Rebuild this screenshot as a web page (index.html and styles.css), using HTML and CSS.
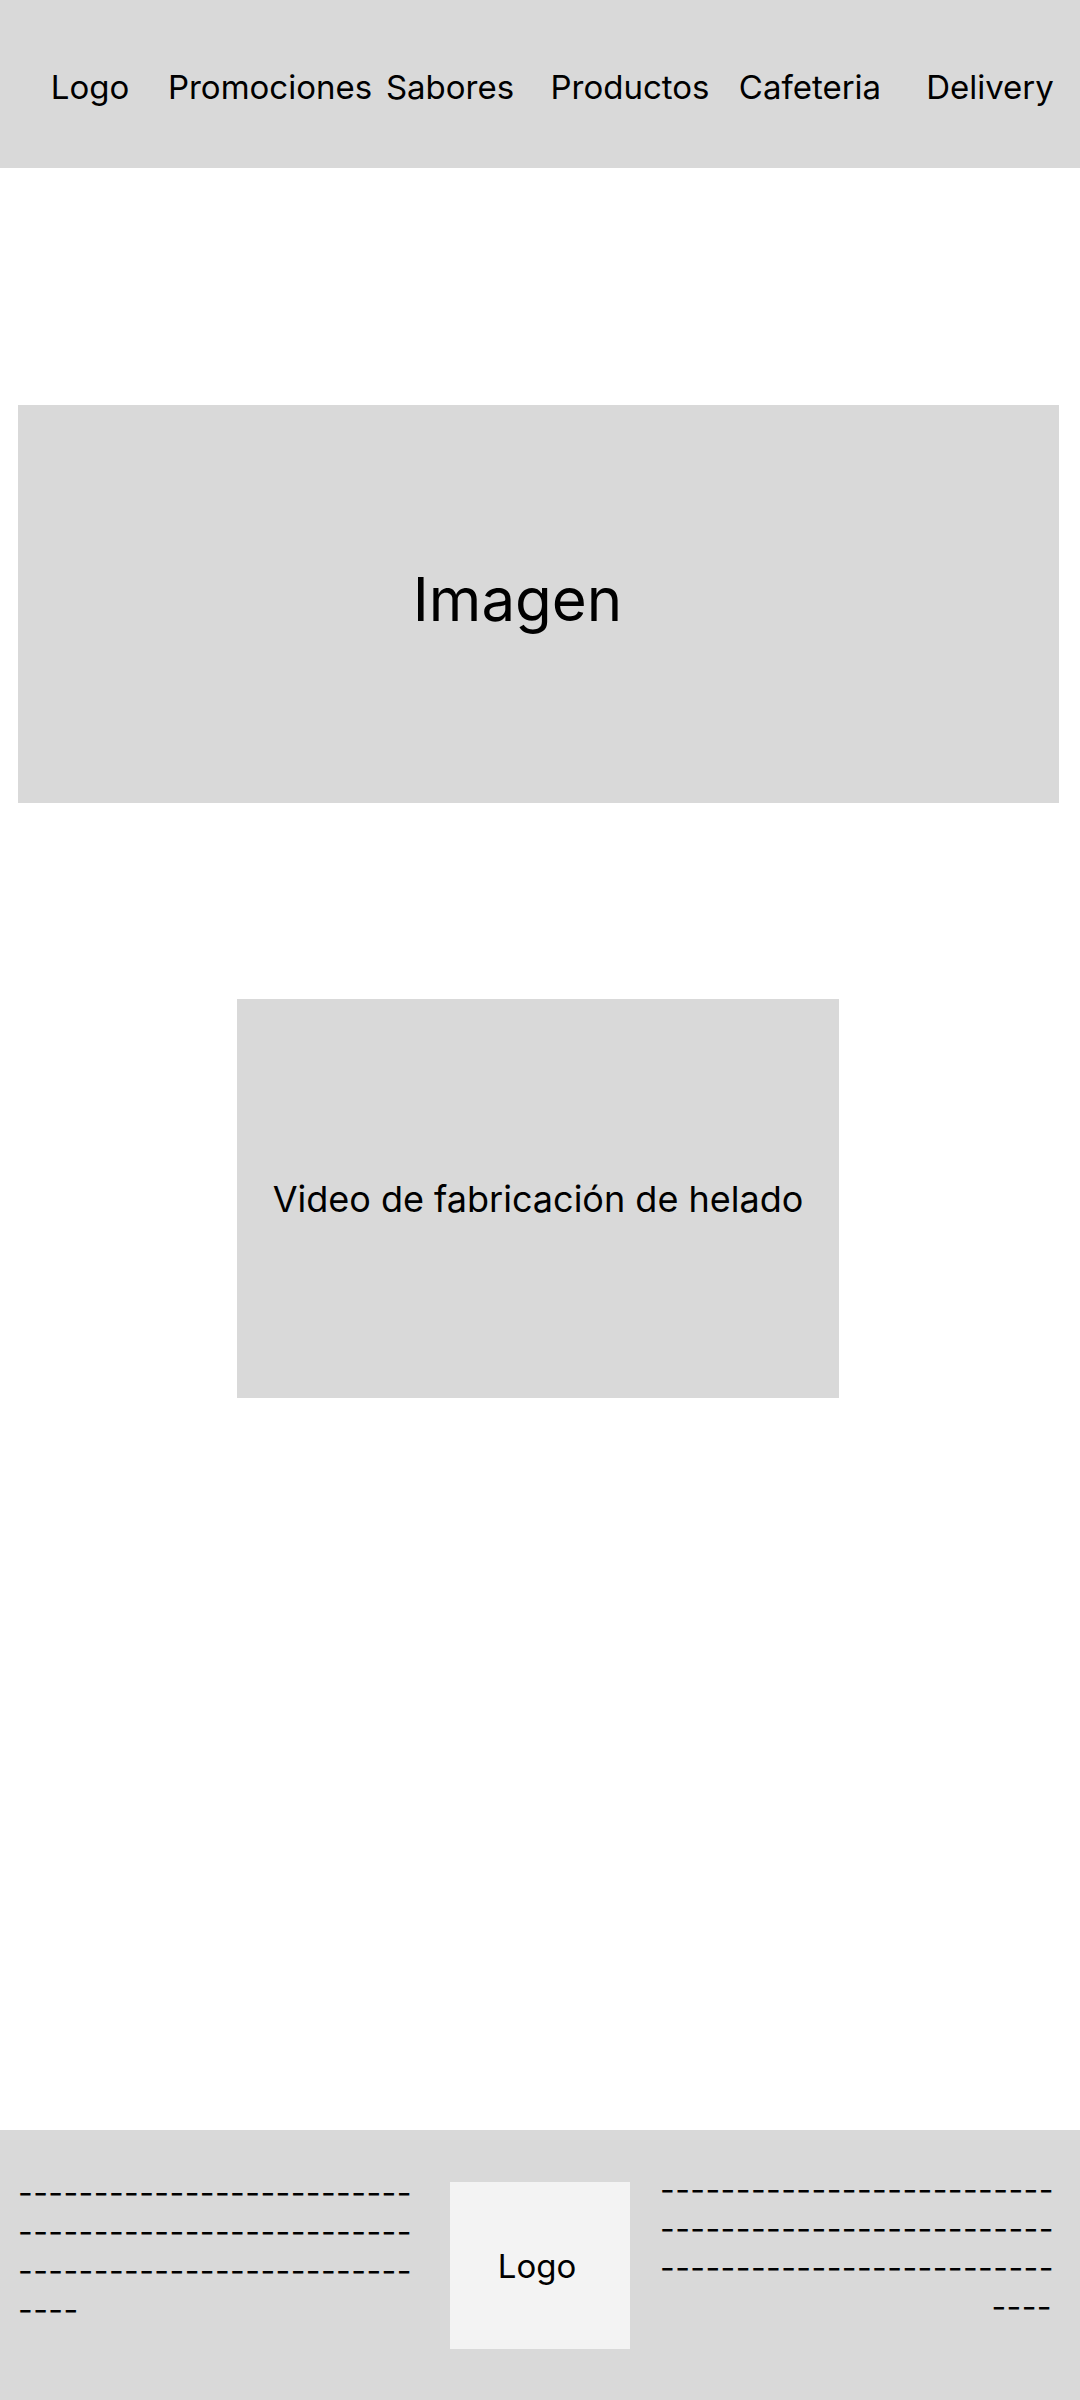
FILE: index.html
```html
<!DOCTYPE html>
<html lang="es">
<head>
<meta charset="utf-8">
<title>Heladería</title>
<link rel="stylesheet" href="styles.css">
</head>
<body>
<header class="topbar">
  <nav class="nav">
    <span class="nav-item">Logo</span>
    <span class="nav-item">Promociones</span>
    <span class="nav-item">Sabores</span>
    <span class="nav-item">Productos</span>
    <span class="nav-item">Cafeteria</span>
    <span class="nav-item">Delivery</span>
  </nav>
</header>
<main class="content">
  <section class="hero">
    <span class="hero-label">Imagen</span>
  </section>
  <section class="video">
    <span class="video-label">Video de fabricación de helado</span>
  </section>
</main>
<footer class="footer">
  <p class="foot-text foot-left">--------------------------<br>--------------------------<br>--------------------------<br>----</p>
  <div class="foot-logo">Logo</div>
  <p class="foot-text foot-right">--------------------------<br>--------------------------<br>--------------------------<br>----</p>
</footer>
</body>
</html>
```
FILE: styles.css
```css
* { box-sizing: border-box; }
html, body {
  margin: 0;
  padding: 0;
  background: #ffffff;
}
body {
  width: 1080px;
  font-family: "Inter", "Noto Sans", sans-serif;
  color: #000000;
}
.topbar {
  height: 168px;
  background: #d9d9d9;
  padding-top: 68px;
}
.nav {
  display: grid;
  grid-template-columns: repeat(6, 180px);
  font-size: 33px;
  line-height: 39px;
}
.nav-item {
  display: flex;
  justify-content: center;
  white-space: nowrap;
}
.content {
  display: flex;
  flex-direction: column;
  padding-top: 237px;
  height: 1962px;
}
.hero {
  margin-left: 18px;
  width: 1041px;
  height: 398px;
  background: #d9d9d9;
  display: flex;
  align-items: center;
  justify-content: center;
  padding-right: 42px;
  padding-bottom: 10px;
}
.hero-label {
  font-size: 60px;
}
.video {
  margin-top: 196px;
  margin-left: 237px;
  width: 602px;
  height: 399px;
  background: #d9d9d9;
  display: flex;
  align-items: center;
  justify-content: center;
}
.video-label {
  font-size: 36px;
  white-space: nowrap;
}
.footer {
  height: 270px;
  background: #d9d9d9;
  display: flex;
  align-items: flex-start;
  padding-left: 18px;
}
.foot-text {
  margin: 0;
  font-size: 32px;
  letter-spacing: 0.43px;
  white-space: nowrap;
}
.foot-left {
  width: 393px;
  margin-top: 43px;
  text-align: left;
}
.foot-logo {
  margin-top: 52px;
  margin-left: 39px;
  width: 180px;
  height: 167px;
  background: #f3f3f3;
  font-size: 33px;
  padding-right: 6px;
  display: flex;
  align-items: center;
  justify-content: center;
}
.foot-right {
  width: 392px;
  margin-left: 30px;
  margin-top: 40px;
  text-align: right;
}
```
